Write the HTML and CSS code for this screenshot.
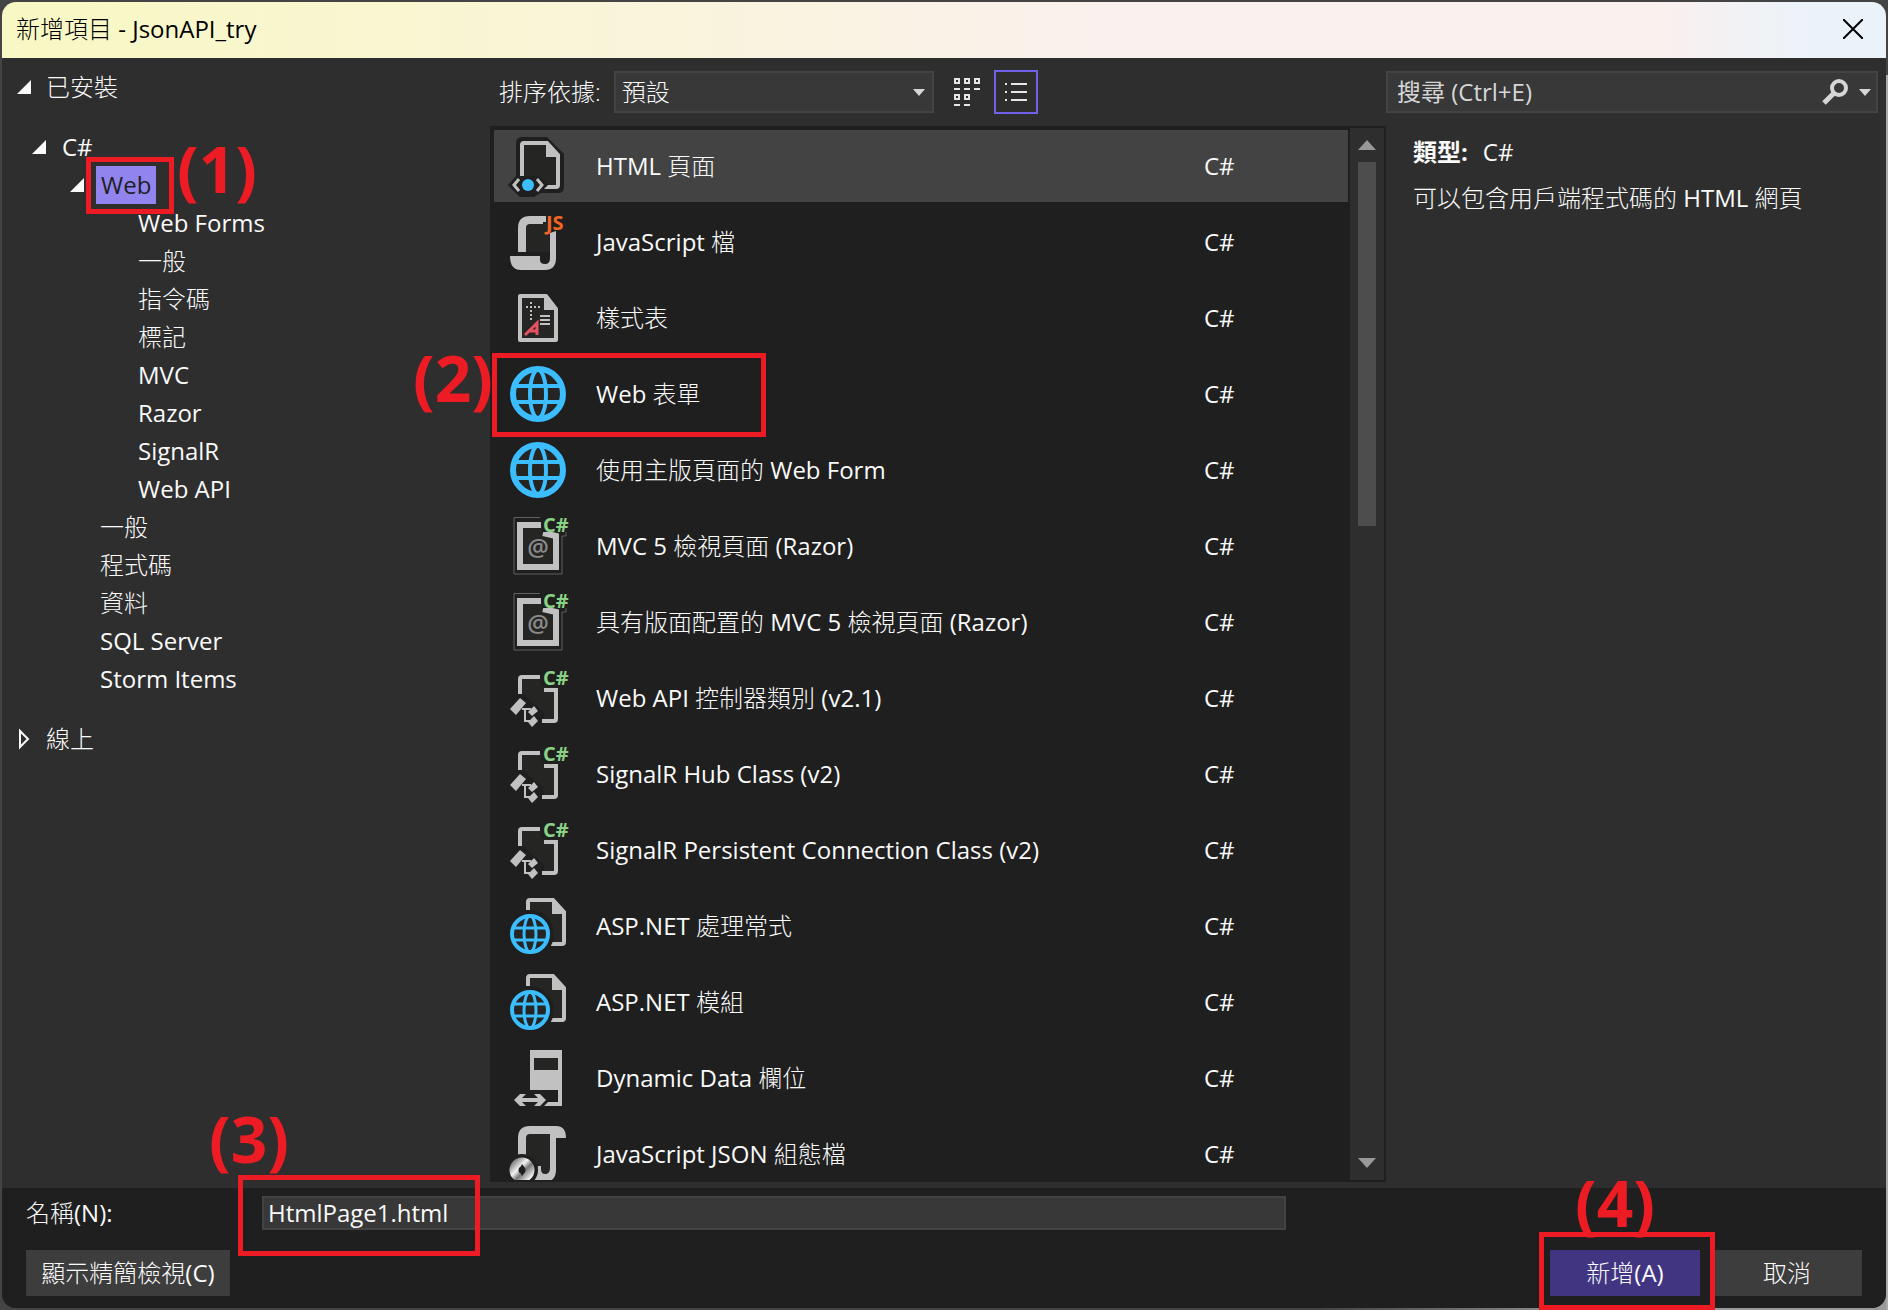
FILE: index.html
```html
<!DOCTYPE html>
<html lang="zh-Hant">
<head>
<meta charset="utf-8">
<meta name="viewport" content="width=device-width, initial-scale=1">
<title>新增項目 - JsonAPI_try</title>
<link rel="stylesheet" href="styles.css">
</head>
<body>
<svg class="sprite" aria-hidden="true">
  <symbol id="i-html" viewBox="0 0 56 56" overflow="visible">
    <path d="M12-1H37L54 16V49Q54 55 48 55H30L24 59H10L-2 47L6 38V5Q6-1 12-1Z" fill="#1f1f1f"/>
    <path d="M12 5H38L48 18V49H12Z" fill="#252523"/>
    <path d="M12 40V7Q12 5 14 5H37L48 17V47Q48 49 46 49H34" fill="none" stroke="#c1c1c1" stroke-width="4"/>
    <path d="M36 3L50 19H36Z" fill="#c1c1c1"/>
    <path d="M8 38H28L38 47L28 57H8L-2 47Z" fill="#1f1f1f"/>
    <path d="M9 41L4 47L9 53M27 41L32 47L27 53" fill="none" stroke="#c1c1c1" stroke-width="3"/>
    <circle cx="18" cy="47" r="6" fill="#3bbdff"/>
  </symbol>
  <symbol id="i-js" viewBox="0 0 56 56" overflow="visible">
    <path d="M16 10H40V38H16Z" fill="#252523"/>
    <path d="M8 38V14Q8 2 20 2H36V8H33V10H20Q16 10 16 14V38Z" fill="#c1c1c1"/>
    <path d="M0 42H30V46Q30 50 35 50Q40 50 40 44V19L46 17V44Q46 56 35 56H11Q0 56 0 42Z" fill="#c1c1c1"/>
  </symbol>
  <symbol id="i-css" viewBox="0 0 56 56" overflow="visible">
    <path d="M10 6H36L46 19V50H10Z" fill="#252523" stroke="#c1c1c1" stroke-width="4" stroke-linejoin="round"/>
    <path d="M34 4L48 20H34Z" fill="#c1c1c1"/>
    <path d="M16 17H30M21 12V30" stroke="#c1c1c1" stroke-width="2" stroke-dasharray="2 2" fill="none"/>
    <path d="M30 26H40M30 30H40M30 34H40" stroke="#c1c1c1" stroke-width="2"/>
    <path d="M15 45L27 33V45M18 41H27" fill="none" stroke="#e5535f" stroke-width="3"/>
  </symbol>
  <symbol id="i-globe" viewBox="0 0 56 56" overflow="visible">
    <circle cx="28" cy="28" r="25" fill="#252523" stroke="#3bbdff" stroke-width="6"/>
    <path d="M4 20H52M4 36H52" stroke="#3bbdff" stroke-width="4"/>
    <ellipse cx="28" cy="28" rx="8" ry="24" fill="none" stroke="#3bbdff" stroke-width="4"/>
  </symbol>
  <symbol id="i-razor" viewBox="0 0 56 56" overflow="visible">
    <path d="M30 -.5H4V56H52V18H56V14M56 0H57" fill="none" stroke="#606060"/>
    <path d="M10 7H46V49H10Z" fill="#252523"/>
    <path d="M31 7H10V49H46V18L33 15" fill="none" stroke="#c1c1c1" stroke-width="6"/>
    <path d="M32 -1H58V14H32Z" fill="#1f1f1f"/>
  </symbol>
  <symbol id="i-class" viewBox="0 0 56 56" overflow="visible">
    <path d="M12 9H46V51H12Z" fill="#252523"/>
    <path d="M4 25H14L34 42V56H8L-2 40ZM31 0H56V17H31Z" fill="#1f1f1f"/>
    <path d="M10 24V9Q10 7 12 7H30M34 20H46V49Q46 51 44 51H32" fill="none" stroke="#c1c1c1" stroke-width="4"/>
    <path d="M0 39L10 28L16 33L6 45ZM18 42L24 36L28 41L22 46ZM18 52L24 46L28 51L22 57Z" fill="#c1c1c1"/>
    <path d="M12 39H21M15 39V51H21" fill="none" stroke="#c1c1c1" stroke-width="2"/>
  </symbol>
  <symbol id="i-handler" viewBox="0 0 56 56" overflow="visible">
    <path d="M18 2H42L54 16V46H18Z" fill="#252523"/>
    <path d="M18 12V4Q18 2 20 2H43L54 14V44Q54 46 52 46H41" fill="none" stroke="#c1c1c1" stroke-width="4"/>
    <path d="M42 0L56 16H42Z" fill="#c1c1c1"/>
    <circle cx="20" cy="36" r="24" fill="#1f1f1f"/>
    <circle cx="20" cy="36" r="18" fill="#252523" stroke="#3bbdff" stroke-width="4"/>
    <path d="M3 30H37M3 42H37" stroke="#3bbdff" stroke-width="3"/>
    <ellipse cx="20" cy="36" rx="6" ry="18" fill="none" stroke="#3bbdff" stroke-width="3"/>
  </symbol>
  <symbol id="i-field" viewBox="0 0 56 56" overflow="visible">
    <path d="M20 0H52V56H34L38 52H48V40H20ZM24 8V20H48V8Z" fill="#c1c1c1" fill-rule="evenodd"/>
    <path d="M24 8H48V20H24Z" fill="#252523"/>
    <path d="M4 50L10 44H16L12 48H28L24 44H30L36 50L30 56H24L28 52H12L16 56H10Z" fill="#c1c1c1"/>
  </symbol>
  <symbol id="i-json" viewBox="0 0 56 56" overflow="visible">
    <path d="M16 8H40V50H16Z" fill="#252523"/>
    <path d="M8 30V12Q8 0 20 0H46Q56 0 56 12H46V44Q46 56 34 56H24V48L28 40H31V43Q31 48 35 48Q40 48 40 42V8H20Q16 8 16 12V30Z" fill="#c1c1c1"/>
    <circle cx="12" cy="44" r="16" fill="#1f1f1f"/>
    <circle cx="12" cy="44" r="8" fill="none" stroke="url(#ring)" stroke-width="9"/>
    <path d="M12 38Q8 44 12 50Q18 44 12 38" fill="#1f1f1f"/>
  </symbol>
  <linearGradient id="ring" x1="0" y1="0" x2="1" y2="1">
    <stop offset="0" stop-color="#8b8b8b"/><stop offset=".35" stop-color="#f4f4f4"/><stop offset=".6" stop-color="#777"/><stop offset="1" stop-color="#eee"/>
  </linearGradient>
</svg>

<div class="dialog" role="dialog" aria-labelledby="dialog-title">
  <header class="titlebar">
    <h1 id="dialog-title">新增項目 <span lang="en">- JsonAPI_try</span></h1>
    <button class="close" type="button" aria-label="關閉">
      <svg width="20" height="20" viewBox="0 0 20 20"><path d="M0 0L20 20M20 0L0 20" stroke="#000" stroke-width="2"/></svg>
    </button>
  </header>

  <main class="content">
    <nav class="tree" aria-label="範本類別">
      <div class="node root"><svg class="caret" viewBox="0 0 14 14"><path d="M14 0V14H0Z"/></svg>已安裝</div>
      <ul>
        <li class="node lv1"><svg class="caret" viewBox="0 0 14 14"><path d="M14 0V14H0Z"/></svg><span lang="en">C#</span></li>
        <li class="node lv2 open"><svg class="caret" viewBox="0 0 14 14"><path d="M14 0V14H0Z"/></svg><span class="chosen" lang="en">Web</span>
          <div class="mark mark-1"><b>(1)</b></div></li>
        <li class="node lv3"><span lang="en">Web Forms</span></li>
        <li class="node lv3">一般</li>
        <li class="node lv3">指令碼</li>
        <li class="node lv3">標記</li>
        <li class="node lv3"><span lang="en">MVC</span></li>
        <li class="node lv3"><span lang="en">Razor</span></li>
        <li class="node lv3"><span lang="en">SignalR</span></li>
        <li class="node lv3"><span lang="en">Web API</span></li>
        <li class="node lv2">一般</li>
        <li class="node lv2">程式碼</li>
        <li class="node lv2">資料</li>
        <li class="node lv2"><span lang="en">SQL Server</span></li>
        <li class="node lv2"><span lang="en">Storm Items</span></li>
      </ul>
      <div class="node root online"><svg class="caret" viewBox="0 0 14 20"><path class="closed" d="M3 2V18L11 10Z"/></svg>線上</div>
    </nav>

    <section class="templates">
      <div class="toolbar">
        <label for="sort">排序依據:</label>
        <div class="select">
          <select id="sort"><option>預設</option></select>
          <svg width="12" height="7" viewBox="0 0 12 7"><path d="M0 0H12L6 7Z" fill="#d6d6d6"/></svg>
        </div>
        <button class="view" type="button" aria-label="中圖示">
          <svg width="26" height="28" viewBox="0 0 26 28" fill="none" stroke="#e6e6e6" stroke-width="2"><path d="M1 1H5V5H1ZM11 1H15V5H11ZM21 1H25V5H21ZM1 17H5V21H1ZM11 17H15V21H11ZM0 11H6M10 11H16M20 11H26M0 27H6M10 27H16"/></svg>
        </button>
        <button class="view active" type="button" aria-label="小圖示">
          <svg width="22" height="18" viewBox="0 0 22 18" stroke="#e6e6e6" stroke-width="2"><path d="M0 1H2M0 9H2M0 17H2M6 1H22M6 9H22M6 17H22"/></svg>
        </button>
      </div>
      <div class="listbox">
        <ul class="items">
          <li class="item selected"><svg class="icon"><use href="#i-html"/></svg><span class="name"><span lang="en">HTML</span> 頁面</span><span class="type" lang="en">C#</span></li>
          <li class="item"><svg class="icon"><use href="#i-js"/><text x="36" y="16" class="icon-js">JS</text></svg><span class="name"><span lang="en">JavaScript</span> 檔</span><span class="type" lang="en">C#</span></li>
          <li class="item"><svg class="icon"><use href="#i-css"/></svg><span class="name">樣式表</span><span class="type" lang="en">C#</span></li>
          <li class="item"><svg class="icon"><use href="#i-globe"/></svg><span class="name"><span lang="en">Web</span> 表單</span><span class="type" lang="en">C#</span>
            <div class="mark mark-2"><b>(2)</b></div></li>
          <li class="item"><svg class="icon"><use href="#i-globe"/></svg><span class="name">使用主版頁面的 <span lang="en">Web Form</span></span><span class="type" lang="en">C#</span></li>
          <li class="item"><svg class="icon"><use href="#i-razor"/><text x="28" y="38" class="icon-at">@</text><text x="33" y="14" class="icon-cs">C#</text></svg><span class="name"><span lang="en">MVC 5</span> 檢視頁面 <span lang="en">(Razor)</span></span><span class="type" lang="en">C#</span></li>
          <li class="item"><svg class="icon"><use href="#i-razor"/><text x="28" y="38" class="icon-at">@</text><text x="33" y="14" class="icon-cs">C#</text></svg><span class="name">具有版面配置的 <span lang="en">MVC 5</span> 檢視頁面 <span lang="en">(Razor)</span></span><span class="type" lang="en">C#</span></li>
          <li class="item"><svg class="icon"><use href="#i-class"/><text x="33" y="15" class="icon-cs">C#</text></svg><span class="name"><span lang="en">Web API</span> 控制器類別 <span lang="en">(v2.1)</span></span><span class="type" lang="en">C#</span></li>
          <li class="item"><svg class="icon"><use href="#i-class"/><text x="33" y="15" class="icon-cs">C#</text></svg><span class="name"><span lang="en">SignalR Hub Class (v2)</span></span><span class="type" lang="en">C#</span></li>
          <li class="item"><svg class="icon"><use href="#i-class"/><text x="33" y="15" class="icon-cs">C#</text></svg><span class="name"><span lang="en">SignalR Persistent Connection Class (v2)</span></span><span class="type" lang="en">C#</span></li>
          <li class="item"><svg class="icon"><use href="#i-handler"/></svg><span class="name"><span lang="en">ASP.NET</span> 處理常式</span><span class="type" lang="en">C#</span></li>
          <li class="item"><svg class="icon"><use href="#i-handler"/></svg><span class="name"><span lang="en">ASP.NET</span> 模組</span><span class="type" lang="en">C#</span></li>
          <li class="item"><svg class="icon"><use href="#i-field"/></svg><span class="name"><span lang="en">Dynamic Data</span> 欄位</span><span class="type" lang="en">C#</span></li>
          <li class="item"><svg class="icon"><use href="#i-json"/></svg><span class="name"><span lang="en">JavaScript JSON</span> 組態檔</span><span class="type" lang="en">C#</span></li>
        </ul>
        <div class="scrollbar" aria-hidden="true">
          <svg width="18" height="10" viewBox="0 0 18 10"><path d="M0 10L9 0L18 10Z" fill="#999"/></svg>
          <div class="track"><div class="thumb"></div></div>
          <svg width="18" height="10" viewBox="0 0 18 10"><path d="M0 0L9 10L18 0Z" fill="#999"/></svg>
        </div>
      </div>
    </section>

    <aside class="details">
      <div class="search">
        <input type="search" aria-label="搜尋" placeholder="搜尋 (Ctrl+E)">
        <button type="button" aria-label="搜尋"><svg width="26" height="26" viewBox="0 0 26 26" fill="none" stroke="#d6d6d6"><circle cx="17" cy="9" r="7" stroke-width="4"/><path d="M12 14L2 24" stroke-width="5"/></svg></button>
        <button type="button" aria-label="搜尋選項"><svg width="12" height="7" viewBox="0 0 12 7"><path d="M0 0H12L6 7Z" fill="#d6d6d6"/></svg></button>
      </div>
      <div class="info">
        <p><strong>類型:</strong><span lang="en">C#</span></p>
        <p>可以包含用戶端程式碼的 <span lang="en">HTML</span> 網頁</p>
      </div>
    </aside>
  </main>

  <footer class="footer">
    <div class="name-row">
      <label for="file">名稱<span lang="en">(N):</span></label>
      <div class="file">
        <input id="file" type="text" value="HtmlPage1.html" lang="en">
        <div class="mark mark-3"><b>(3)</b></div>
      </div>
    </div>
    <div class="buttons">
      <button class="btn compact" type="button">顯示精簡檢視<span lang="en">(C)</span></button>
      <div class="add">
        <button class="btn primary" type="button">新增<span lang="en">(A)</span></button>
        <div class="mark mark-4"><b>(4)</b></div>
      </div>
      <button class="btn" type="button">取消</button>
    </div>
  </footer>
</div>
</body>
</html>
```
FILE: styles.css
```css
* {
  box-sizing: border-box;
}

body {
  margin: 0;
  padding: 2px;
  min-height: 100vh;
  display: flex;
  overflow: hidden;
  background: linear-gradient(#444 0 75px, #aaa 75px) right / 2px 100% no-repeat,
    linear-gradient(90deg, #444 0 70%, #999 85%) bottom / 100% 20px no-repeat, #444;
  color: #fafafa;
  font: 300 24px/38px "Open Sans", "Noto Sans CJK TC", sans-serif;
}

h1, p, ul {
  margin: 0;
  padding: 0;
  font-size: inherit;
  font-weight: inherit;
  list-style: none;
}

button, input, select {
  font: inherit;
  color: inherit;
  border: 0;
  border-radius: 0;
  margin: 0;
  padding: 0;
  background: none;
}

svg {
  display: block;
  flex: none;
}

/* Han glyphs are set light, Latin at regular weight */
span[lang="en"],
input {
  font-weight: 400;
}

.sprite {
  position: absolute;
  width: 0;
  height: 0;
}

.dialog {
  flex: 1;
  display: flex;
  flex-direction: column;
  height: calc(100vh - 4px);
  border-radius: 14px;
  background: #2e2e2e;
}

/* title bar */
.titlebar {
  display: flex;
  align-items: center;
  justify-content: space-between;
  height: 56px;
  padding: 0 23px 2px 14px;
  border-radius: 14px 14px 0 0;
  background: linear-gradient(90deg, #f8f8c4, #f9f5d6 28%, #faf0ee 60%, #faf0ee 88%, #ebf3fa 96%);
  color: #000;
}

/* three columns */
.content {
  flex: 1;
  min-height: 0;
  display: grid;
  grid-template-columns: 488px minmax(0, 1fr) 500px;
}

.tree {
  padding-top: 10px;
}

.node {
  position: relative;
  display: flex;
  align-items: center;
  height: 38px;
}

.root {
  gap: 15px;
  padding-left: 15px;
  margin-bottom: 22px;
}

.online {
  margin-top: 22px;
}

.caret {
  width: 14px;
  overflow: visible;
  fill: #fafafa;
}

.closed {
  fill: none;
  stroke: #fafafa;
  stroke-width: 2;
}

.lv1 { gap: 16px; padding-left: 30px; }
.lv2 { padding-left: 98px; }
.lv2.open { gap: 12px; padding-left: 68px; }
.lv3 { padding-left: 136px; }

.chosen {
  padding: 0 5px;
  background: #9184ee;
  color: #1f1f1f;
}

/* template list */
.templates {
  display: flex;
  flex-direction: column;
  min-height: 0;
  padding-bottom: 6px;
}

.toolbar {
  display: flex;
  align-items: center;
  height: 68px;
  padding-left: 9px;
}

.toolbar label {
  margin-right: 13px;
}

.select {
  display: flex;
  align-items: center;
  flex: 0 1 320px;
  height: 42px;
  padding-right: 7px;
  border: 2px solid #434343;
  background: #383838;
}

.select select {
  flex: 1;
  appearance: none;
  padding-left: 6px;
}

.view {
  display: grid;
  place-items: center;
  width: 44px;
  height: 44px;
  margin-left: 11px;
}

.view.active {
  margin-left: 5px;
  border: 2px solid #7160e8;
}

.listbox {
  flex: 1;
  min-height: 0;
  display: flex;
  border: 2px solid #1f1f1f;
  background: #1f1f1f;
}

.items {
  flex: 1;
  padding: 2px;
  overflow-x: visible;
  overflow-y: clip;
}

.item {
  position: relative;
  display: flex;
  align-items: center;
  height: 72px;
  margin-bottom: 4px;
  padding-left: 16px;
}

.item.selected {
  background: #434343;
}

.icon {
  width: 56px;
  height: 56px;
  margin-right: 30px;
  overflow: visible;
}

.name {
  flex: 1;
}

.type {
  width: 144px;
}

.icon-js, .icon-cs {
  font: 700 20px "Open Sans", sans-serif;
}

.icon-js { fill: #f26522; }
.icon-cs { fill: #89d185; }

.icon-at {
  font: 600 24px "Open Sans", sans-serif;
  text-anchor: middle;
  fill: #8a8a8a;
}

.scrollbar {
  display: flex;
  flex-direction: column;
  align-items: center;
  gap: 12px;
  width: 34px;
  padding: 12px 0;
  background: #2e2e2e;
}

.track {
  flex: 1;
  width: 18px;
}

.thumb {
  height: 37%;
  background: #4d4d4d;
}

/* details pane */
.details {
  padding: 13px 8px 0 0;
}

.search {
  display: flex;
  align-items: center;
  gap: 11px;
  height: 42px;
  padding: 0 5px 0 9px;
  border: 2px solid #434343;
  background: #383838;
}

.search input {
  flex: 1;
  min-width: 0;
  appearance: none;
}

.search input::placeholder {
  color: #d6d6d6;
  opacity: 1;
}

.info {
  display: grid;
  gap: 8px;
  padding: 20px 0 0 27px;
}

.info strong {
  margin-right: 15px;
  font-weight: 700;
}

/* footer */
.footer {
  padding: 8px 24px 12px;
  border-radius: 0 0 14px 14px;
  background: #1f1f1f;
}

.name-row, .buttons {
  display: flex;
  align-items: center;
}

.name-row label {
  width: 236px;
}

.file {
  position: relative;
  flex: 0 1 1024px;
}

.file input {
  display: block;
  width: 100%;
  height: 34px;
  padding: 0 4px;
  border: 2px solid #434343;
  background: #383838;
}

.name-row {
  height: 34px;
}

.buttons {
  gap: 12px;
  padding-top: 20px;
}

.btn {
  width: 150px;
  height: 46px;
  background: #3d3d3d;
}

.compact {
  width: 204px;
  margin-right: auto;
}

.primary {
  display: block;
  background: #413582;
}

.add {
  position: relative;
}

/* numbered callouts drawn over the dialog */
.mark {
  position: absolute;
  z-index: 1;
  border: 5px solid #ed1c24;
  color: #ed1c24;
  pointer-events: none;
}

.mark b {
  position: absolute;
  font: 700 64px/64px "Open Sans", sans-serif;
}

.mark-1 { left: 84px; top: -9px; width: 88px; height: 57px; }
.mark-1 b { left: 86px; top: -25px; }
.mark-2 { left: -2px; top: -5px; width: 274px; height: 84px; }
.mark-2 b { right: 268px; top: -12px; }
.mark-3 { left: -24px; top: -21px; width: 242px; height: 81px; }
.mark-3 b { left: -34px; bottom: 80px; }
.mark-4 { left: -11px; top: -18px; width: 176px; height: 78px; }
.mark-4 b { left: 31px; bottom: 70px; }
```
